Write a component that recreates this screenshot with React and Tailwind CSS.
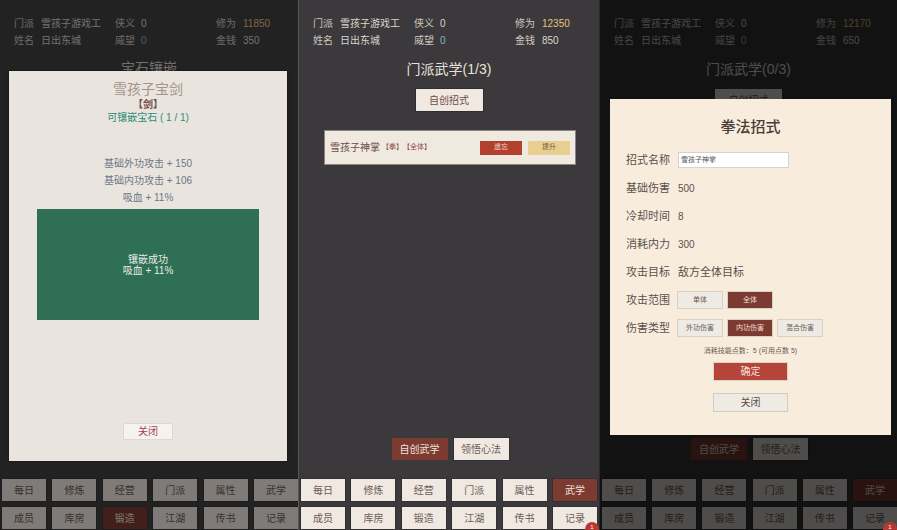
import React from "react";

const FONT = { fontFamily: '"Liberation Sans", "Noto Sans CJK SC", sans-serif' };

const NAV1 = ["每日", "修炼", "经营", "门派", "属性", "武学"];
const NAV2 = ["成员", "库房", "锻造", "江湖", "传书", "记录"];

function Info({ xiuwei, money }) {
  return (
    <div className="pt-[15px] pl-[14px] text-[10px] leading-[17px]">
      <div className="flex">
        <div className="flex w-[101px]"><span className="w-[27px] text-[#cfc7bf]">门派</span><span className="text-[#ddd6ce]">雪孩子游戏工</span></div>
        <div className="flex w-[101px]"><span className="w-[26px] text-[#cfc7bf]">侠义</span><span className="text-[#ddd6ce]">0</span></div>
        <div className="flex"><span className="w-[27px] text-[#cfc7bf]">修为</span><span className="text-[#e3c37f]">{xiuwei}</span></div>
      </div>
      <div className="flex">
        <div className="flex w-[101px]"><span className="w-[27px] text-[#cfc7bf]">姓名</span><span className="text-[#ddd6ce]">日出东城</span></div>
        <div className="flex w-[101px]"><span className="w-[26px] text-[#cfc7bf]">威望</span><span className="text-[#7fb4c4]">0</span></div>
        <div className="flex"><span className="w-[27px] text-[#cfc7bf]">金钱</span><span className="text-[#ddd6ce]">{money}</span></div>
      </div>
    </div>
  );
}

function NavBtn({ label, active }) {
  return (
    <div
      className={
        "h-[22px] w-[44px] flex items-center justify-center text-[10px] shadow-[0_0_0_1px_rgba(0,0,0,0.15)] " +
        (active ? "bg-[#7b3b31] text-[#f1e2da]" : "bg-[#efe9e2] text-[#6e5a55]")
      }
    >
      {label}
    </div>
  );
}

function Nav({ active }) {
  return (
    <div className="flex flex-col gap-[6px] pl-[2px] pb-[1px]">
      <div className="flex gap-[6.4px]">
        {NAV1.map((n) => <NavBtn key={n} label={n} active={n === active} />)}
      </div>
      <div className="flex gap-[6.4px]">
        {NAV2.map((n) => <NavBtn key={n} label={n} active={n === active} />)}
      </div>
    </div>
  );
}

function Badge() {
  return (
    <div className="absolute right-[0px] bottom-[-6px] w-[14px] h-[14px] rounded-full bg-[#b63a33] text-white text-[6px] leading-[8px] flex items-start justify-center pt-[1px]">1</div>
  );
}

function BottomBtns() {
  return (
    <div className="flex justify-center gap-[6px] mb-[19px] pl-[2px]">
      <div className="w-[56px] h-[22px] bg-[#7b3b31] text-[#f1e2da] text-[10px] flex items-center justify-center">自创武学</div>
      <div className="w-[55px] h-[22px] bg-[#efe9e2] text-[#6e5a55] text-[10px] flex items-center justify-center shadow-[0_0_0_1px_rgba(0,0,0,0.15)]">领悟心法</div>
    </div>
  );
}

function Panel1() {
  return (
    <div className="relative w-[298px] h-[530px] bg-[#434143] flex flex-col overflow-hidden">
      <Info xiuwei="11850" money="350" />
      <div className="text-center text-[14px] leading-[20px] mt-[9px] text-[#d8d0c8]">宝石镶嵌</div>
      <div className="mt-auto"><Nav active="锻造" /></div>
      <div className="absolute inset-0 bg-black/[0.47]" />
      <div className="absolute left-[9px] top-[71px] w-[278px] h-[390px] bg-[#e9e4dd] shadow-[0_0_2px_rgba(0,0,0,0.5)] flex flex-col items-center pt-[10px]">
        <div className="text-[14px] leading-[17px] text-[#a59389]">雪孩子宝剑</div>
        <div className="text-[10px] leading-[14px] font-bold text-[#6a4a44]">【剑】</div>
        <div className="text-[10px] leading-[12px] text-[#2f8c7c]">可镶嵌宝石 ( 1 / 1)</div>
        <div className="mt-[31px] flex flex-col items-center text-[10px] leading-[17px] text-[#6d778a]">
          <div>基础外功攻击 + 150</div>
          <div>基础内功攻击 + 106</div>
          <div>吸血 + 11%</div>
        </div>
        <div className="mt-[3px] w-[222px] h-[111px] bg-[#2f6f55] flex flex-col items-center justify-center text-[10px] leading-[11px] text-[#e6ece6]">
          <div>镶嵌成功</div>
          <div>吸血 + 11%</div>
        </div>
        <div className="mt-[104px] w-[48px] h-[15px] bg-[#f6f3ef] shadow-[0_0_1px_rgba(0,0,0,0.3)] flex items-center justify-center text-[10px] text-[#a0464f]">关闭</div>
      </div>
    </div>
  );
}

function Panel2() {
  return (
    <div className="relative w-[301px] h-[530px] bg-[#3b393b] border-l border-[#56545a] flex flex-col">
      <Info xiuwei="12350" money="850" />
      <div className="text-center text-[14px] leading-[20px] mt-[10px] text-[#e8e2dc]">门派武学(1/3)</div>
      <div className="flex justify-center mt-[10px]">
        <div className="w-[67px] h-[22px] bg-[#efe9e2] text-[#6e4a45] text-[10px] flex items-center justify-center shadow-[0_0_0_1px_rgba(0,0,0,0.2)]">自创招式</div>
      </div>
      <div className="mt-[19px] ml-[25px] w-[252px] h-[35px] bg-[#efe9e0] border border-[#8c8480] flex items-center pl-[5px] pr-[5px]">
        <span className="text-[10px] text-[#6e4c46]">雪孩子神掌</span>
        <span className="text-[7px] text-[#8a4a42] ml-[2px]">【拳】</span>
        <span className="text-[7px] text-[#8a4a42]">【全体】</span>
        <div className="ml-auto flex gap-[6px]">
          <div className="w-[42px] h-[14px] bg-[#b2402f] text-[#f3d8d0] text-[7px] flex items-center justify-center">遗忘</div>
          <div className="w-[42px] h-[14px] bg-[#e9cf8f] text-[#7a5a40] text-[7px] flex items-center justify-center">提升</div>
        </div>
      </div>
      <div className="mt-auto"><BottomBtns /></div>
      <Nav active="武学" />
      <Badge />
    </div>
  );
}

function Opt({ label, active }) {
  return (
    <div
      className={
        "w-[44px] h-[16px] text-[7px] flex items-center justify-center shadow-[0_0_0_1px_rgba(0,0,0,0.12)] " +
        (active ? "bg-[#7b3b33] text-[#f1dcd4]" : "bg-[#eeeae4] text-[#6a5a55]")
      }
    >
      {label}
    </div>
  );
}

function Row({ label, children }) {
  return (
    <div className="h-[28px] flex items-center">
      <span className="w-[52px] text-[11px] text-[#5a504c]">{label}</span>
      <div className="text-[10px] text-[#5a504c] flex items-center gap-[6px]">{children}</div>
    </div>
  );
}

function Panel3() {
  return (
    <div className="relative w-[298px] h-[530px] bg-[#3b393b] border-l border-[#2a2829] flex flex-col">
      <Info xiuwei="12170" money="650" />
      <div className="text-center text-[14px] leading-[20px] mt-[10px] text-[#e8e2dc]">门派武学(0/3)</div>
      <div className="flex justify-center mt-[10px]">
        <div className="w-[67px] h-[22px] bg-[#efe9e2] text-[#6e4a45] text-[10px] flex items-center justify-center">自创招式</div>
      </div>
      <div className="mt-auto"><BottomBtns /></div>
      <Nav active="武学" />
      <div className="absolute inset-0 bg-black/[0.67]" />
      <Badge />
      <div className="absolute left-[10px] top-[99px] w-[281px] h-[336px] bg-[#f8eddd] flex flex-col pt-[18px] pl-[16px]">
        <div className="text-center pr-[16px] text-[15px] leading-[20px] font-medium text-[#4a3c37]">拳法招式</div>
        <div className="mt-[9px]">
          <Row label="招式名称">
            <div className="w-[111px] h-[16px] bg-white border border-[#d8d2cc] text-[7px] flex items-center pl-[2px] text-[#555]">雪孩子神掌</div>
          </Row>
          <Row label="基础伤害">500</Row>
          <Row label="冷却时间">8</Row>
          <Row label="消耗内力">300</Row>
          <Row label="攻击目标"><span className="text-[11px]">敌方全体目标</span></Row>
          <Row label="攻击范围">
            <Opt label="单体" />
            <Opt label="全体" active />
          </Row>
          <Row label="伤害类型">
            <Opt label="外功伤害" />
            <Opt label="内功伤害" active />
            <Opt label="混合伤害" />
          </Row>
        </div>
        <div className="pr-[16px] mt-[4px] text-center text-[7px] leading-[10px] text-[#6a5a55]">消耗技能点数：5 (可用点数 5)</div>
        <div className="pr-[16px] flex justify-center mt-[7px]">
          <div className="w-[73px] h-[17px] bg-[#b5443a] text-[#f6e2da] text-[10px] flex items-center justify-center shadow-[0_0_0_1px_rgba(0,0,0,0.1)]">确定</div>
        </div>
        <div className="pr-[16px] flex justify-center mt-[14px]">
          <div className="w-[73px] h-[17px] bg-[#eeeae4] text-[#5a4a45] text-[10px] flex items-center justify-center shadow-[0_0_0_1px_rgba(0,0,0,0.15)]">关闭</div>
        </div>
      </div>
    </div>
  );
}

export default function App() {
  return (
    <div className="w-[897px] h-[530px] flex overflow-hidden bg-[#141213]" style={FONT}>
      <Panel1 />
      <Panel2 />
      <Panel3 />
    </div>
  );
}
